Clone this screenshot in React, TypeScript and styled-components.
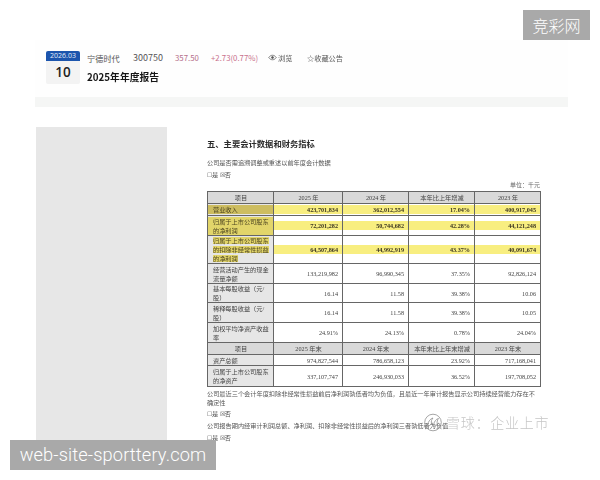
import React from "react";
import styled, { createGlobalStyle } from "styled-components";

const serif = `"Liberation Serif", "Noto Sans CJK SC", serif`;
const sans = `"Noto Sans CJK SC", "Open Sans", sans-serif`;

const GlobalStyle = createGlobalStyle`
  html, body {
    margin: 0;
    padding: 0;
    background: #fff;
    overflow: hidden;
  }
`;

const Page = styled.div`
  position: relative;
  width: 600px;
  height: 480px;
  overflow: hidden;
  background: #fff;
`;

const Content = styled.div`
  padding: 40px 32px 0 35px;
  filter: blur(0.5px);
`;

const Header = styled.header`
  display: flex;
  gap: 7px;
  height: 57px;
  padding: 11px 0 0 11px;
  box-sizing: border-box;
  background: #fefefe;
`;

const DateBox = styled.div`
  width: 34px;
  height: 33px;
  border-radius: 2px;
  overflow: hidden;
  background: #f3f3f3;
  text-align: center;
`;

const DateMonth = styled.div`
  height: 10px;
  background: #1c55ad;
  color: #e4ecf8;
  font: 7px/10px "Open Sans", sans-serif;
`;

const DateDay = styled.div`
  font: 600 13.5px/22px "Open Sans", sans-serif;
  color: #222;
`;

const Info = styled.div`
  display: flex;
  flex-direction: column;
  gap: 6px;
`;

const Meta = styled.div`
  display: flex;
  align-items: center;
  height: 13px;
  font-family: ${sans};
`;

const MetaItem = styled.span<{ $w: number; $tone?: string; $size?: number }>`
  display: inline-flex;
  align-items: center;
  gap: 1px;
  width: ${(p) => p.$w}px;
  font-size: ${(p) => p.$size ?? 7.2}px;
  color: ${(p) => p.$tone ?? "#555"};
  white-space: nowrap;
`;

const ReportTitle = styled.h1`
  margin: 0;
  font: 700 9.8px/14px ${sans};
  color: #161616;
`;

const Band = styled.div`
  height: 10px;
  background: #f5f6f5;
`;

const Body = styled.div`
  display: flex;
  margin-top: 20px;
`;

const Sidebar = styled.aside`
  flex: none;
  width: 131px;
  height: 323px;
  margin-left: 1px;
  background: #e7e7e7;
`;

const Doc = styled.main`
  width: 333px;
  margin-left: 40px;
  font-family: ${serif};
  color: #444;
`;

const SectionTitle = styled.h2`
  margin: 10px 0 0;
  font: 700 8.3px/12px ${sans};
  color: #2a2a2a;
`;

const Line = styled.p<{ $top: number }>`
  margin: ${(p) => p.$top}px 0 0;
  font-size: 6.2px;
  line-height: 9px;
  color: #555;
`;

const Unit = styled.div`
  margin-top: 2px;
  font-size: 6px;
  line-height: 8px;
  text-align: right;
  color: #666;
`;

const Table = styled.table`
  width: 333px;
  margin-top: 2px;
  table-layout: fixed;
  border-collapse: collapse;
  border: 1px solid #555;
  font-size: 6.2px;
  line-height: 9px;
`;

const Row = styled.tr<{ $h: number }>`
  height: ${(p) => p.$h}px;
`;

const Cell = styled.td<{ $kind?: "head" | "label" }>`
  padding: 0 4px 0 5px;
  border: 1px solid #666;
  text-align: ${(p) => (p.$kind === "head" ? "center" : p.$kind ? "left" : "right")};
  color: ${(p) => (p.$kind === "head" ? "#444" : "#444")};
  background: ${(p) => (p.$kind === "head" ? "#d9d9d9" : p.$kind === "label" ? "#e6e6e6" : "transparent")};
  overflow: hidden;
`;

const Mark = styled.span`
  display: block;
  margin: 0 -4px 0 -5px;
  padding: 0 4px 0 5px;
  background: #f8ee80;
  color: #3a3420;
  font-weight: 700;
`;

const LabelMark = styled.span<{ $fill: "band" | "block" | "text" }>`
  display: ${(p) => (p.$fill === "text" ? "inline" : "block")};
  margin: ${(p) => (p.$fill === "text" ? "0" : "0 -4px 0 -5px")};
  padding: ${(p) => (p.$fill === "text" ? "0" : "0 4px 0 5px")};
  background: ${(p) => (p.$fill === "band" ? "#cdbd60" : "#e2d56a")};
  color: #4c4420;
`;

const Note = styled.p<{ $top: number }>`
  margin: ${(p) => p.$top}px 0 0;
  font-size: 6.2px;
  line-height: 9px;
  color: #555;
`;

const SiteTag = styled.div`
  position: absolute;
  top: 10px;
  left: 523px;
  width: 67px;
  height: 30px;
  background: #a9a9a9;
  color: #fff;
  font: 300 16px/30px ${sans};
  text-align: center;
`;

const UrlTag = styled.div`
  position: absolute;
  top: 440px;
  left: 10px;
  width: 206px;
  height: 30px;
  background: #a9a9a9;
  color: #fff;
  font: 300 18.2px/30px "Roboto", sans-serif;
  text-align: center;
  letter-spacing: 0.15px;
  white-space: nowrap;
`;

const Brand = styled.div`
  position: absolute;
  top: 413px;
  left: 424px;
  display: flex;
  align-items: center;
  gap: 4px;
  color: #c6c6c6;
  font: 300 14px/19px ${sans};
  letter-spacing: 0.75px;
  white-space: nowrap;
`;

const EyeIcon = () => (
  <svg width="9" height="7" viewBox="0 0 12 8" fill="none" stroke="#555" strokeWidth="1">
    <path d="M1 4c1.5-2 3-3 5-3s3.5 1 5 3c-1.5 2-3 3-5 3S2.500 6 1 4z" />
    <circle cx="6" cy="4" r="1.300" fill="#555" />
  </svg>
);

const BrandLogo = () => (
  <svg width="18" height="19" viewBox="0 0 18 19" fill="none" stroke="#8f8f8f" strokeWidth="0.8">
    <circle cx="9" cy="9.500" r="8.300" />
    <path d="M3.500 12c1-4 3-6.500 5.500-7-1.500 1.500-2 3.500-1.500 5.500-1 2-3 3-4 1.500z" />
    <path d="M9.500 12.500c.5-4 2.500-6.500 5-7-1.200 1.500-1.700 3.500-1.200 5.500-1 2-3 3-3.800 1.500z" />
  </svg>
);

type DataLine = {
  h: number;
  label: string;
  vals: string[];
  fill?: "band" | "block" | "text";
};

const rows: DataLine[] = [
  { h: 12, fill: "band", label: "营业收入", vals: ["423,701,834", "362,012,554", "17.04%", "400,917,045"] },
  {
    h: 20,
    fill: "block",
    label: "归属于上市公司股东的净利润",
    vals: ["72,201,282", "50,744,682", "42.28%", "44,121,248"],
  },
  {
    h: 27,
    fill: "text",
    label: "归属于上市公司股东的扣除非经常性损益的净利润",
    vals: ["64,507,864", "44,992,919", "43.37%", "40,091,674"],
  },
  { h: 20, label: "经营活动产生的现金流量净额", vals: ["133,219,982", "96,990,345", "37.35%", "92,826,124"] },
  { h: 19, label: "基本每股收益（元/股）", vals: ["16.14", "11.58", "39.38%", "10.06"] },
  { h: 20, label: "稀释每股收益（元/股）", vals: ["16.14", "11.58", "39.38%", "10.05"] },
  { h: 20, label: "加权平均净资产收益率", vals: ["24.91%", "24.13%", "0.78%", "24.04%"] },
];

const balance: DataLine[] = [
  { h: 11, label: "资产总额", vals: ["974,827,544", "786,658,123", "23.92%", "717,168,041"] },
  { h: 21, label: "归属于上市公司股东的净资产", vals: ["337,107,747", "246,930,033", "36.52%", "197,708,052"] },
];

const DataRow = ({ row }: { row: DataLine }) => (
  <Row $h={row.h}>
    <Cell $kind="label">{row.fill ? <LabelMark $fill={row.fill}>{row.label}</LabelMark> : row.label}</Cell>
    {row.vals.map((v) => (
      <Cell key={v}>{row.fill ? <Mark>{v}</Mark> : v}</Cell>
    ))}
  </Row>
);

const HeadRow = ({ cells, h }: { cells: string[]; h: number }) => (
  <Row $h={h}>
    {cells.map((c) => (
      <Cell key={c} $kind="head">
        {c}
      </Cell>
    ))}
  </Row>
);

const App = () => {
  return (
    <Page>
      <GlobalStyle />
      <Content>
        <Header>
          <DateBox>
            <DateMonth>2026.03</DateMonth>
            <DateDay>10</DateDay>
          </DateBox>
          <Info>
            <Meta>
              <MetaItem $w={46} $size={8.2}>宁德时代</MetaItem>
              <MetaItem $w={42} $size={9}>300750</MetaItem>
              <MetaItem $w={36} $size={7.800} $tone="#b5708a">357.50</MetaItem>
              <MetaItem $w={57} $size={7.800} $tone="#c9708c">+2.73(0.77%)</MetaItem>
              <MetaItem $w={39}>
                <EyeIcon />
                浏览
              </MetaItem>
              <MetaItem $w={40}>☆收藏公告</MetaItem>
            </Meta>
            <ReportTitle>2025年年度报告</ReportTitle>
          </Info>
        </Header>
        <Band />
        <Body>
          <Sidebar />
          <Doc>
            <SectionTitle>五、主要会计数据和财务指标</SectionTitle>
            <Line $top={9}>公司是否需追溯调整或重述以前年度会计数据</Line>
            <Line $top={3}>☐是 ☒否</Line>
            <Unit>单位：千元</Unit>
            <Table>
              <colgroup>
                <col style={{ width: 66 }} />
                <col style={{ width: 69 }} />
                <col style={{ width: 66 }} />
                <col style={{ width: 66 }} />
                <col style={{ width: 66 }} />
              </colgroup>
              <tbody>
                <HeadRow h={12} cells={["项目", "2025 年", "2024 年", "本年比上年增减", "2023 年"]} />
                {rows.map((r) => (
                  <DataRow key={r.vals[0]} row={r} />
                ))}
                <HeadRow h={12} cells={["项目", "2025 年末", "2024 年末", "本年末比上年末增减", "2023 年末"]} />
                {balance.map((r) => (
                  <DataRow key={r.vals[0]} row={r} />
                ))}
              </tbody>
            </Table>
            <Note $top={2}>
              公司最近三个会计年度扣除非经常性损益前后净利润孰低者均为负值，且最近一年审计报告显示公司持续经营能力存在不确定性
            </Note>
            <Note $top={2}>☐是 ☒否</Note>
            <Note $top={3}>公司报告期内经审计利润总额、净利润、扣除非经常性损益后的净利润三者孰低者为负值</Note>
            <Note $top={3}>☐是 ☒否</Note>
          </Doc>
        </Body>
      </Content>
      <Brand>
        <BrandLogo />
        雪球：企业上市
      </Brand>
      <SiteTag>竞彩网</SiteTag>
      <UrlTag>web-site-sporttery.com</UrlTag>
    </Page>
  );
};

export default App;
